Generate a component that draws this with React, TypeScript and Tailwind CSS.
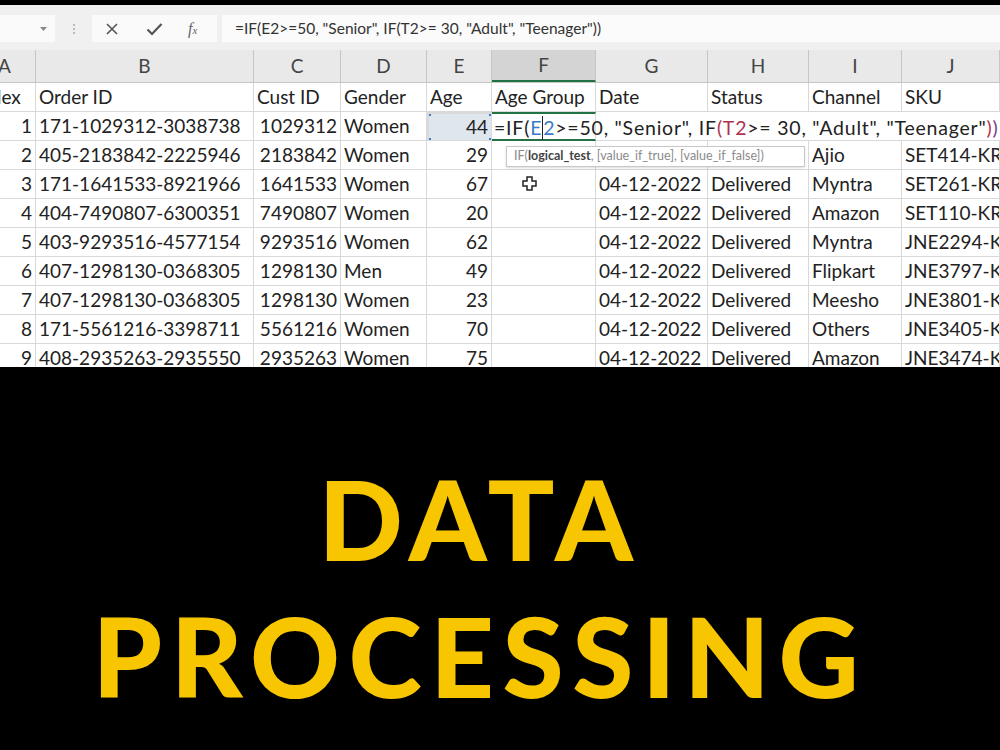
import React from "react";

const cols = ["A", "B", "C", "D", "E", "F", "G", "H", "I", "J"];

const rows = [
  ["1", "171-1029312-3038738", "1029312", "Women", "44", "", "", "", "", ""],
  ["2", "405-2183842-2225946", "2183842", "Women", "29", "", "", "", "Ajio", "SET414-KR-NP-L"],
  ["3", "171-1641533-8921966", "1641533", "Women", "67", "", "04-12-2022", "Delivered", "Myntra", "SET261-KR-PP-S"],
  ["4", "404-7490807-6300351", "7490807", "Women", "20", "", "04-12-2022", "Delivered", "Amazon", "SET110-KR-PP-M"],
  ["5", "403-9293516-4577154", "9293516", "Women", "62", "", "04-12-2022", "Delivered", "Myntra", "JNE2294-KR-A-XXL"],
  ["6", "407-1298130-0368305", "1298130", "Men", "49", "", "04-12-2022", "Delivered", "Flipkart", "JNE3797-KR-S"],
  ["7", "407-1298130-0368305", "1298130", "Women", "23", "", "04-12-2022", "Delivered", "Meesho", "JNE3801-KR-XXL"],
  ["8", "171-5561216-3398711", "5561216", "Women", "70", "", "04-12-2022", "Delivered", "Others", "JNE3405-KR-S"],
  ["9", "408-2935263-2935550", "2935263", "Women", "75", "", "04-12-2022", "Delivered", "Amazon", "JNE3474-KR-XL"],
];

const heads = ["Index", "Order ID", "Cust ID", "Gender", "Age", "Age Group", "Date", "Status", "Channel", "SKU"];
const rightCols = [0, 2, 4];

const grid = "grid grid-cols-[36px_218px_87px_86px_65px_104px_112px_101px_93px_98px]";

function Cell({ text, col, row }: { text: string; col: number; row: number }) {
  const right = row > 0 && rightCols.includes(col);
  const editRow = row === 1 && col >= 6;
  const isE2 = row === 1 && col === 4;
  const isF2 = row === 1 && col === 5;
  let cls = "h-[29px] flex items-center overflow-hidden whitespace-nowrap px-[3px] border-b border-[#d9d9d9] ";
  cls += editRow ? "" : "border-r ";
  if (right) cls += "justify-end ";
  if (isE2) cls += "relative bg-[#dfe6ee] border-2 border-[#3a7cc3] ";
  if (isF2) cls += "border-t-2 border-b-2 border-t-[#217346] border-b-[#217346] ";
  return (
    <div className={cls}>
      {col === 0 && row === 0 ? <span className="-ml-[28px]">{text}</span> : <span>{text}</span>}
      {isE2 && (
        <>
          <span className="absolute -left-[3px] -top-[3px] w-[5px] h-[5px] bg-[#3a7cc3]" />
          <span className="absolute -right-[3px] -top-[3px] w-[5px] h-[5px] bg-[#3a7cc3]" />
          <span className="absolute -left-[3px] -bottom-[3px] w-[5px] h-[5px] bg-[#3a7cc3]" />
          <span className="absolute -right-[3px] -bottom-[3px] w-[5px] h-[5px] bg-[#3a7cc3]" />
        </>
      )}
    </div>
  );
}

export default function App() {
  return (
    <div className="w-[1000px] h-[750px] bg-black overflow-hidden flex flex-col font-['Lato',sans-serif]">
      <div className="h-[5px] shrink-0 bg-black" />
      {/* sheet */}
      <div className="h-[362px] shrink-0 overflow-hidden bg-white relative">
        {/* formula bar */}
        <div className="h-[45px] bg-[#f0f0f0] flex items-start pt-[10px]">
          <div className="w-[55px] h-[27px] bg-[#fafafa] flex items-center justify-end pr-[8px]">
            <svg width="7" height="4" viewBox="0 0 7 4"><path d="M0 0h7L3.5 4z" fill="#888" /></svg>
          </div>
          <div className="w-[37px] h-[27px] flex flex-col items-center justify-center gap-[2px]">
            <span className="w-[2px] h-[2px] bg-[#bbb]" />
            <span className="w-[2px] h-[2px] bg-[#bbb]" />
            <span className="w-[2px] h-[2px] bg-[#bbb]" />
          </div>
          <div className="w-[125px] h-[27px] bg-[#fafafa] flex items-center">
            <svg className="ml-[13px]" width="14" height="14" viewBox="0 0 14 14">
              <path d="M2 2l10 10M12 2L2 12" stroke="#555" strokeWidth="1.6" />
            </svg>
            <svg className="ml-[27px]" width="17" height="14" viewBox="0 0 17 14">
              <path d="M1.5 7.5l4.5 4.5L15.5 2" stroke="#555" strokeWidth="2.2" fill="none" />
            </svg>
            <span className="ml-[25px] text-[16px] italic text-[#666] font-['Liberation_Serif',serif]">
              f<span className="text-[11px]">x</span>
            </span>
          </div>
          <div className="ml-[5px] flex-1 h-[27px] bg-[#fbfbfb] flex items-center pl-[13px] text-[15.5px] text-[#333] whitespace-nowrap">
            =IF(E2&gt;=50, "Senior", IF(T2&gt;= 30, "Adult", "Teenager"))
          </div>
        </div>
        {/* column headers */}
        <div className={`${grid} h-[33px] bg-[#e9e9e9] text-[19px] text-[#444] border-b border-[#c6c6c6]`}>
          {cols.map((c, i) => (
            <div
              key={c}
              className={
                i === 5
                  ? "flex items-center justify-center bg-[#d4d4d4] border-r border-[#c6c6c6] border-b-2 border-b-[#217346]"
                  : i === 0
                  ? "flex items-center -ml-[2px] border-r border-[#c6c6c6]"
                  : "flex items-center justify-center border-r border-[#c6c6c6]"
              }
            >
              {c}
            </div>
          ))}
        </div>
        {/* rows */}
        <div className="text-[19px] text-[#222]">
          <div className={grid}>
            {heads.map((h, i) => (
              <Cell key={h} text={h} col={i} row={0} />
            ))}
          </div>
          {rows.map((r, ri) => (
            <div key={ri} className={grid}>
              {r.map((v, ci) => (
                <Cell key={ci} text={v} col={ci} row={ri + 1} />
              ))}
            </div>
          ))}
        </div>
        {/* cell being edited */}
        <div className="absolute left-[494px] top-[108px] h-[29px] flex items-center text-[19.5px] tracking-[0.04em] text-[#222] whitespace-nowrap">
          <span>=IF(</span>
          <span className="text-[#3a7cc3]">E</span>
          <span className="w-px h-[24px] bg-[#222]" />
          <span className="text-[#3a7cc3]">2</span>
          <span>&gt;=50, "Senior", IF</span>
          <span className="text-[#b0324f]">(T2</span>
          <span>&gt;= 30, "Adult", "Teenager"</span>
          <span className="text-[#b0324f]">)</span>
          <span className="text-[#7a3a8a]">)</span>
        </div>
        {/* function tooltip */}
        <div className="absolute left-[506px] top-[141px] w-[299px] h-[21px] bg-white border border-[#c8c8c8] flex items-center pl-[7px] text-[12.5px] text-[#8a8a8a] whitespace-nowrap shadow-sm">
          IF(<span className="font-bold text-[#444]">logical_test</span>, [value_if_true], [value_if_false])
        </div>
        {/* cell cursor */}
        <svg className="absolute left-[522px] top-[171px]" width="15" height="15" viewBox="0 0 15 15">
          <path d="M5 1h5v4h4v5h-4v4H5v-4H1V5h4z" fill="#fff" stroke="#222" strokeWidth="1.5" />
        </svg>
      </div>
      {/* title */}
      <div className="flex-1 flex flex-col items-center pt-[96px] pr-[40px] text-[#f7c600] font-black text-[111px] leading-none tracking-[0.077em]">
        <div>DATA</div>
        <div className="mt-[26px]">PROCESSING</div>
      </div>
    </div>
  );
}
